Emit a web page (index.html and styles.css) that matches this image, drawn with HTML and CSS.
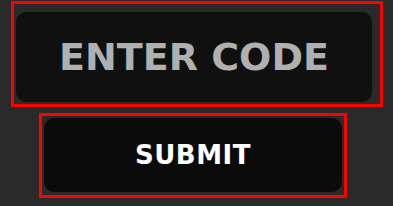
FILE: index.html
```html
<!DOCTYPE html>
<html lang="en">
<head>
    <meta charset="UTF-8">
    <meta name="viewport" content="width=device-width, initial-scale=1.0">
    <title>enter code</title>
    <link rel="stylesheet" href="styles.css">
</head>
<body>

<div class="code-form">
    <div class="outline code-outline">
        <input type="text" class="code-input" placeholder="ENTER CODE" maxlength="12">
    </div>
    <div class="outline submit-outline">
        <button class="submit-button">SUBMIT</button>
    </div>
</div>

</body>
</html>
```

FILE: styles.css
```css
body {
    font-family: 'DejaVu Sans', sans-serif;
    background-color: #2a2a2a;
    margin: 0;
    padding: 0;
    width: 393px;
    height: 206px;
    overflow: hidden;
}

.code-form {
    display: flex;
    flex-direction: column;
    gap: 6px;
    padding-top: 1px;
}

.outline {
    border: 3px solid #ff0000;
    display: flex;
}

.code-outline {
    margin-left: 11px;
    width: 356px;
    height: 90px;
    padding: 8px 8px 2px 2px;
}

.submit-outline {
    margin-left: 39px;
    width: 298px;
    height: 74px;
    padding: 2px 2px 3px 2px;
}

.code-input {
    width: 100%;
    height: 90px;
    box-sizing: border-box;
    border: none;
    border-radius: 10px;
    background-color: #101010;
    color: #b0b0b0;
    font-family: 'DejaVu Sans', sans-serif;
    font-weight: bold;
    font-size: 38px;
    text-align: center;
    padding: 0;
}

.code-input::placeholder {
    color: #b0b0b0;
    opacity: 1;
}

.code-input:focus {
    outline: none;
}

.submit-button {
    width: 100%;
    height: 74px;
    border: none;
    border-radius: 10px;
    background-color: #0b0b0b;
    color: #ffffff;
    font-family: 'DejaVu Sans', sans-serif;
    font-weight: bold;
    font-size: 26px;
    letter-spacing: 0.5px;
    cursor: pointer;
    padding: 0;
}
```
